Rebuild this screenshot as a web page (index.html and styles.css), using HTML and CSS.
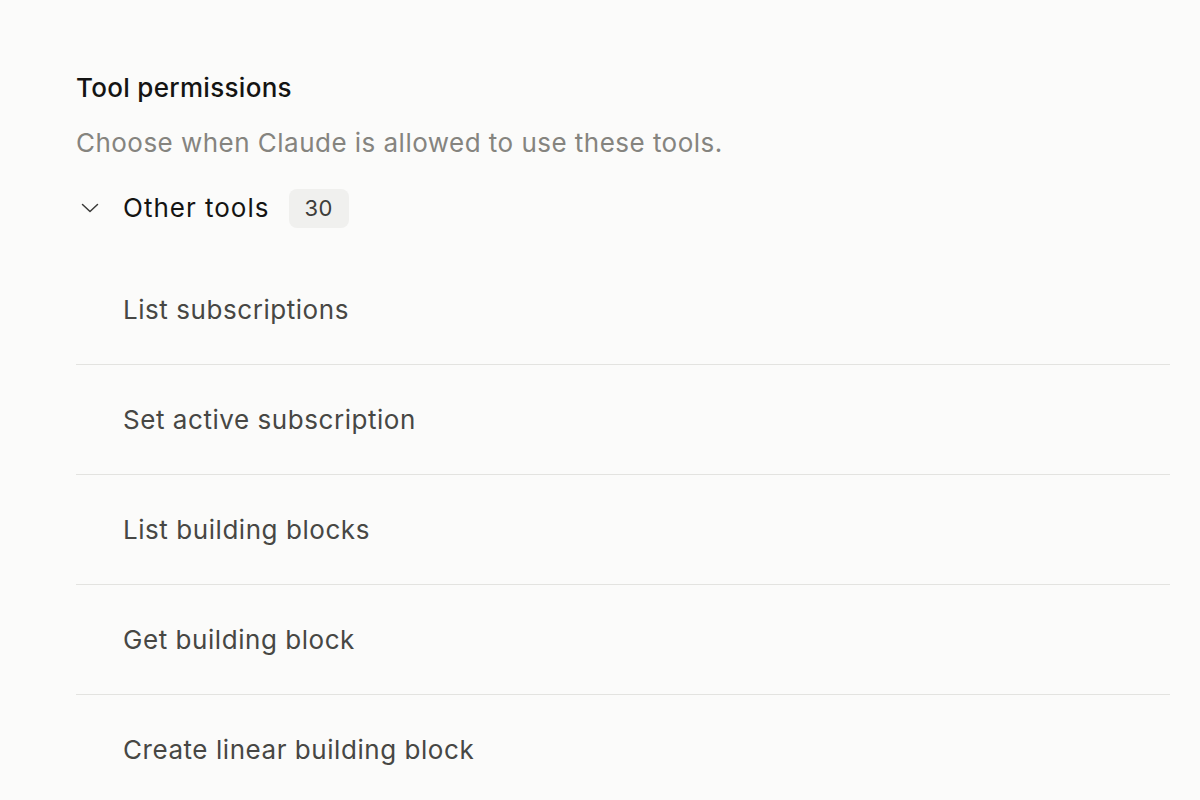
FILE: index.html
```html
<!DOCTYPE html>
<html lang="en">
<head>
<meta charset="utf-8">
<title>Tool permissions</title>
<link rel="stylesheet" href="styles.css">
</head>
<body>
<main class="panel">
  <h2 class="title">Tool permissions</h2>
  <p class="subtitle">Choose when Claude is allowed to use these tools.</p>
  <div class="group-header">
    <span class="chevron">
      <svg width="18" height="10" viewBox="0 0 18 10" fill="none"><path d="M1.5 1.5 L9 8.5 L16.5 1.5" stroke="#3a3a38" stroke-width="1.5" stroke-linecap="round" stroke-linejoin="round"/></svg>
    </span>
    <span class="group-name">Other tools</span>
    <span class="badge">30</span>
  </div>
  <ul class="tool-list">
    <li class="tool-row">List subscriptions</li>
    <li class="tool-row">Set active subscription</li>
    <li class="tool-row">List building blocks</li>
    <li class="tool-row">Get building block</li>
    <li class="tool-row">Create linear building block</li>
  </ul>
</main>
</body>
</html>
```
FILE: styles.css
```css
html, body {
  margin: 0;
  padding: 0;
  background: #fbfbfa;
}
body {
  font-family: Inter, "Noto Sans", "Liberation Sans", sans-serif;
  color: #141413;
  overflow: hidden;
  height: 800px;
}
.panel {
  padding: 70px 30px 0 76px;
}
.title {
  margin: 0;
  font-size: 26px;
  line-height: 36px;
  font-weight: 500;
  letter-spacing: 0.3px;
  color: #141413;
}
.subtitle {
  margin: 19px 0 0;
  font-size: 26px;
  line-height: 36px;
  letter-spacing: 0.47px;
  color: #85847f;
}
.group-header {
  margin-top: 27px;
  height: 40px;
  display: flex;
  align-items: center;
}
.chevron {
  width: 27px;
  display: flex;
  justify-content: center;
  margin-right: 20px;
}
.group-name {
  font-size: 26px;
  line-height: 36px;
  letter-spacing: 1px;
  color: #141413;
}
.badge {
  margin-left: 20px;
  height: 39px;
  padding: 0 16px 0 15px;
  border-radius: 8px;
  background: #f0f0ee;
  color: #3d3d3a;
  font-size: 22px;
  letter-spacing: 0.5px;
  display: flex;
  align-items: center;
}
.tool-list {
  list-style: none;
  margin: 27px 0 0;
  padding: 0;
}
.tool-row {
  height: 109px;
  border-bottom: 1px solid #e3e3e0;
  padding-left: 47px;
  display: flex;
  align-items: center;
  font-size: 26px;
  letter-spacing: 0.55px;
  color: #474744;
}
```
